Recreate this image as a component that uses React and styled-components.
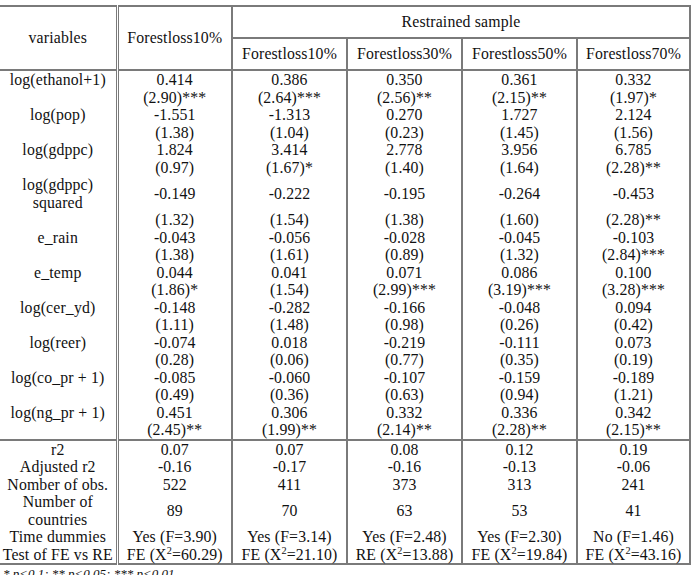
import React from "react";
import styled, { createGlobalStyle } from "styled-components";

const Global = createGlobalStyle`
  html, body { margin: 0; padding: 0; background: #fff; }
  body { font-family: "Liberation Serif", "Times New Roman", serif; color: #111; }
`;

const Page = styled.div`
  padding-top: 5px;
  width: 691px;
  overflow: hidden;
`;

const Table = styled.table`
  border-collapse: collapse;
  table-layout: fixed;
  width: 690px;
  font-size: 15.8px;
  line-height: 17.5px;
  letter-spacing: 0.15px;
`;

const Col = styled.col`
  width: ${(p) => p.$w}px;
`;

const Head = styled.thead`
  border-top: 2px solid #7a7a7a;
  border-bottom: 2px solid #7a7a7a;
`;

const HeadCell = styled.th`
  font-weight: normal;
  text-align: center;
  vertical-align: middle;
  padding: 0;
  height: 30px;
  border-right: ${(p) => (p.$double ? "3px double #7a7a7a" : "2px solid #7a7a7a")};
  border-bottom: ${(p) => (p.$under ? "2px solid #7a7a7a" : "none")};
`;

const Body = styled.tbody`
  border-bottom: 2px solid #7a7a7a;
`;

const Cell = styled.td`
  text-align: center;
  vertical-align: middle;
  padding: 0;
  white-space: nowrap;
  border-right: ${(p) => (p.$double ? "3px double #7a7a7a" : "2px solid #7a7a7a")};
`;

const Sup = styled.sup`
  font-size: 0.65em;
  line-height: 0;
`;

const Note = styled.div`
  font-style: italic;
  font-size: 13px;
  padding: 0 0 0 3px;
  line-height: 15px;
  margin-top: 1px;
`;

const widths = [117, 115, 115, 115, 115, 113];
const cols = ["Forestloss10%", "Forestloss30%", "Forestloss50%", "Forestloss70%"];

const rows = [
  ["log(ethanol+1)", ["0.414", "0.386", "0.350", "0.361", "0.332"]],
  ["", ["(2.90)***", "(2.64)***", "(2.56)**", "(2.15)**", "(1.97)*"]],
  ["log(pop)", ["-1.551", "-1.313", "0.270", "1.727", "2.124"]],
  ["", ["(1.38)", "(1.04)", "(0.23)", "(1.45)", "(1.56)"]],
  ["log(gdppc)", ["1.824", "3.414", "2.778", "3.956", "6.785"]],
  ["", ["(0.97)", "(1.67)*", "(1.40)", "(1.64)", "(2.28)**"]],
  [["log(gdppc)", "squared"], ["-0.149", "-0.222", "-0.195", "-0.264", "-0.453"]],
  ["", ["(1.32)", "(1.54)", "(1.38)", "(1.60)", "(2.28)**"]],
  ["e_rain", ["-0.043", "-0.056", "-0.028", "-0.045", "-0.103"]],
  ["", ["(1.38)", "(1.61)", "(0.89)", "(1.32)", "(2.84)***"]],
  ["e_temp", ["0.044", "0.041", "0.071", "0.086", "0.100"]],
  ["", ["(1.86)*", "(1.54)", "(2.99)***", "(3.19)***", "(3.28)***"]],
  ["log(cer_yd)", ["-0.148", "-0.282", "-0.166", "-0.048", "0.094"]],
  ["", ["(1.11)", "(1.48)", "(0.98)", "(0.26)", "(0.42)"]],
  ["log(reer)", ["-0.074", "0.018", "-0.219", "-0.111", "0.073"]],
  ["", ["(0.28)", "(0.06)", "(0.77)", "(0.35)", "(0.19)"]],
  ["log(co_pr + 1)", ["-0.085", "-0.060", "-0.107", "-0.159", "-0.189"]],
  ["", ["(0.49)", "(0.36)", "(0.63)", "(0.94)", "(1.21)"]],
  ["log(ng_pr + 1)", ["0.451", "0.306", "0.332", "0.336", "0.342"]],
  ["", ["(2.45)**", "(1.99)**", "(2.14)**", "(2.28)**", "(2.15)**"]],
];

const X = ({ v, p = "FE" }) => (
  <>
    {p} (X<Sup>2</Sup>={v})
  </>
);

const stats = [
  ["r2", ["0.07", "0.07", "0.08", "0.12", "0.19"]],
  ["Adjusted r2", ["-0.16", "-0.17", "-0.16", "-0.13", "-0.06"]],
  ["Nomber of obs.", ["522", "411", "373", "313", "241"]],
  [["Number of", "countries"], ["89", "70", "63", "53", "41"]],
  ["Time dummies", ["Yes (F=3.90)", "Yes (F=3.14)", "Yes (F=2.48)", "Yes (F=2.30)", "No (F=1.46)"]],
  [
    "Test of FE vs RE",
    [
      <X v="60.29" />,
      <X v="21.10" />,
      <X v="13.88" p="RE" />,
      <X v="19.84" />,
      <X v="43.16" />,
    ],
  ],
];

const Label = ({ l }) =>
  Array.isArray(l) ? (
    <>
      {l[0]}
      <br />
      {l[1]}
    </>
  ) : (
    l
  );

const Section = ({ data }) => (
  <Body>
    {data.map(([l, vals], i) => (
      <tr key={i}>
        <Cell $double>
          <Label l={l} />
        </Cell>
        {vals.map((v, j) => (
          <Cell key={j}>{v}</Cell>
        ))}
      </tr>
    ))}
  </Body>
);

export default function App() {
  return (
    <Page>
      <Global />
      <Table>
        <colgroup>
          {widths.map((w, i) => (
            <Col key={i} $w={w} />
          ))}
        </colgroup>
        <Head>
          <tr>
            <HeadCell rowSpan={2} $double>
              variables
            </HeadCell>
            <HeadCell rowSpan={2}>Forestloss10%</HeadCell>
            <HeadCell colSpan={4} $under>
              Restrained sample
            </HeadCell>
          </tr>
          <tr>
            {cols.map((c) => (
              <HeadCell key={c}>{c}</HeadCell>
            ))}
          </tr>
        </Head>
        <Section data={rows} />
        <Section data={stats} />
      </Table>
      <Note>* p&lt;0.1; ** p&lt;0.05; *** p&lt;0.01</Note>
    </Page>
  );
}
